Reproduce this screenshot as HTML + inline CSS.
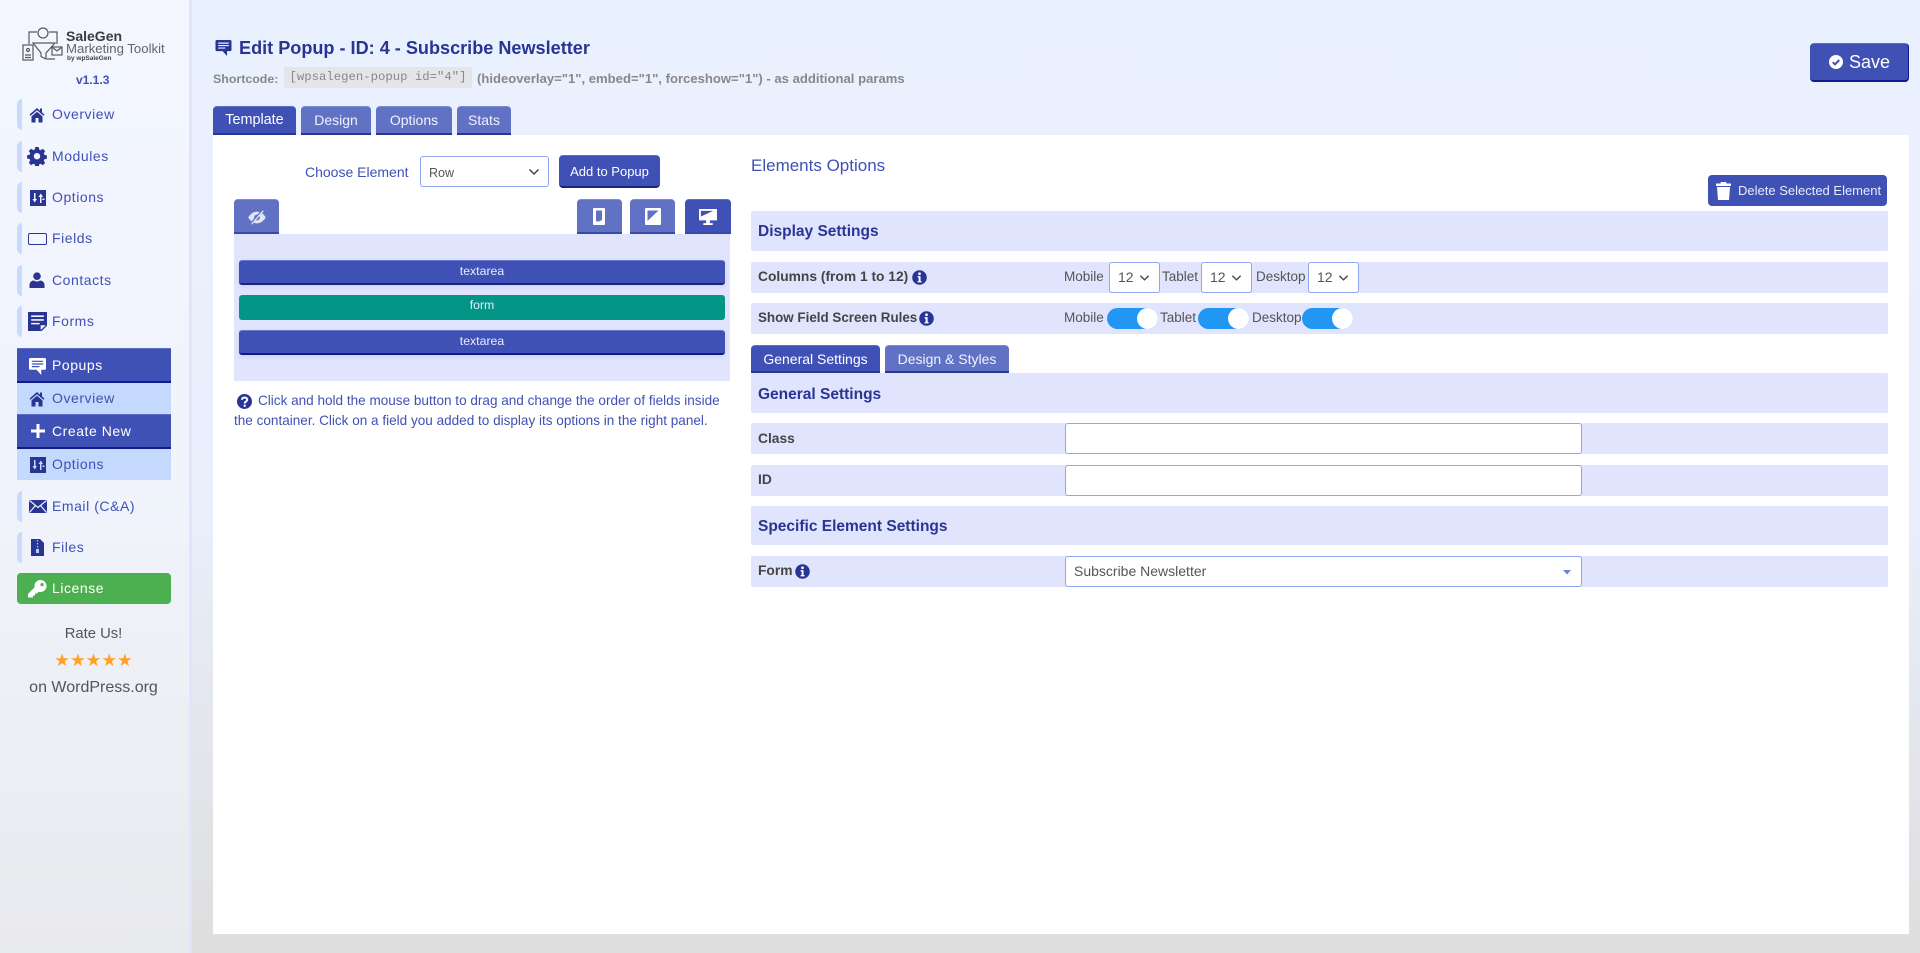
<!DOCTYPE html>
<html lang="en"><head><meta charset="utf-8"><title>Edit Popup</title>
<style>
*{box-sizing:border-box}
html,body{margin:0;padding:0}
body{width:1920px;height:953px;position:relative;overflow:hidden;font-family:"Liberation Sans",sans-serif;background:linear-gradient(#eaf1fe 0,#e9eefb 55%,#dedede 100%);color:#3f51b5}
.a{position:absolute;white-space:nowrap}
#side{position:absolute;left:0;top:0;width:192px;height:953px;background:linear-gradient(#f3f6ff 0,#f1f4fc 50%,#e9eaee 100%);border-right:3px solid #dfe6fb}
.it{position:absolute;left:17px;width:154px;height:31px;border-left:5px solid #c9dafc;border-radius:5px 0 0 5px}
.lb{position:absolute;left:52px;font-size:14px;letter-spacing:.55px;line-height:20px;color:#3f51b5;white-space:nowrap}
.ic{position:absolute}
.act{position:absolute;left:17px;width:154px;background:#3f51b5;border-bottom:2px solid #0d1b8c;border-top:1px solid #5c6fc7}
.sub{position:absolute;left:17px;width:154px;height:31px;background:#c5d8fd}
.tab{position:absolute;top:106px;height:29px;border-radius:4px 4px 0 0;text-align:center;color:#fff;font-size:14px;line-height:26px;border-bottom:2px solid #283593}
.on{background:#3f51b5;border-top:1px solid #5c6fc7}
.off{background:#6172c4;color:#f0f2ff;border-top:1px solid #7d8dd3}
.btn{position:absolute;background:#3f51b5;color:#fff;border-radius:4px;text-align:center}
.st{position:absolute;top:199px;height:35px;border-radius:4px 4px 0 0;width:45px;border-bottom:2px solid #3949ab}
.row{position:absolute;left:239px;width:486px;height:25px;border-radius:3px;color:#e8ecff;font-size:12.300px;line-height:21px;text-align:center}
.bar{position:absolute;left:751px;width:1137px;background:#e0e4fd;border-radius:2px}
.h{position:absolute;left:758px;font-weight:700;font-size:15.500px;color:#283593;line-height:20px;white-space:nowrap}
.k{position:absolute;left:758px;font-weight:700;font-size:13.800px;color:#444;line-height:20px;white-space:nowrap}
.m{position:absolute;font-size:13.500px;color:#555;line-height:20px;white-space:nowrap}
.sel{position:absolute;background:#fff;border:1px solid #8fa6ee;border-radius:3px;color:#555}
.n{width:51px;height:31px;top:262px;font-size:14px;line-height:29px;padding-left:8px}
.n svg{position:absolute;right:9px;top:11px;width:11px;height:8px}
.inp{position:absolute;left:1065px;width:517px;height:31px;background:#fff;border:1px solid #8fa6ee;border-radius:3px}
.tg{position:absolute;top:308px;width:51px;height:21px;border-radius:11px;background:#2196f3}
.tg i{position:absolute;right:0;top:0;width:21px;height:21px;border-radius:50%;background:#fff}
</style></head><body>
<svg width="0" height="0" style="position:absolute">
<symbol id="home" viewBox="0 0 16 16"><path fill="#283593" d="M8 1 0.500 7.600 1.500 8.800 8 3.200l6.500 5.600 1-1.200L13 5.400V1.500h-2v2.200zM2.500 9.400V15.500h4V11h3v4.500h4V9.400L8 4.700z"/></symbol>
<symbol id="gear" viewBox="-1 -1 20 20"><path fill="#283593" fill-rule="evenodd" d="M7.300 0h3.400l.5 2.500 1.500.7 2.200-1.400 2.300 2.400-1.400 2.100.6 1.600 2.500.5v3.300l-2.500.5-.6 1.500 1.400 2.200-2.300 2.300-2.200-1.400-1.500.6-.5 2.600H7.300l-.5-2.600-1.500-.6-2.200 1.400L.8 15.700l1.400-2.200-.6-1.500L-.9 11.500V8.200l2.500-.5.600-1.600L.8 4 3.100 1.700l2.200 1.400 1.500-.7zM9 6a3.200 3.200 0 1 0 0 6.400A3.200 3.200 0 0 0 9 6z"/></symbol>
<symbol id="opts" viewBox="0 0 16 16"><path fill="#283593" fill-rule="evenodd" d="M0 0h16v16H0zM4 3v6H2.500L4.700 12.500 7 9H5.500V3zM11.500 13V7H13l-2.200-3.500L8.500 7H10v6zM12.500 8.500h2v1.500h-2z"/></symbol>
<symbol id="user" viewBox="0 0 16 16"><circle cx="8" cy="4.200" r="3.800" fill="#283593"/><path fill="#283593" d="M0.500 16v-3c0-3 2.500-4.500 4.500-4.500 1 .7 2 1 3 1s2-.3 3-1c2 0 4.500 1.500 4.500 4.500v3z"/></symbol>
<symbol id="form" viewBox="0 0 18 18"><path fill="#283593" d="M0 0h18v13l-5 5H0z"/><path stroke="#f3f4fb" stroke-width="1.500" d="M3 4h12M3 7.500h12M3 11h8"/><path fill="#f3f4fb" d="M12 17v-4.500h5z"/></symbol>
<symbol id="chat" viewBox="0 0 18 18"><path fill="currentColor" d="M1.500 0h15A1.500 1.500 0 0 1 18 1.500V11a1.500 1.500 0 0 1-1.500 1.500H13V18l-5-5.500H1.500A1.500 1.500 0 0 1 0 11V1.500A1.500 1.500 0 0 1 1.500 0z"/><path stroke="var(--s,#3f51b5)" stroke-width="1.300" d="M3 3.500h12M3 6.300h12M3 9.100h8"/></symbol>
<symbol id="mail" viewBox="0 0 18 13"><path fill="#283593" d="M0 0h18v13H0z"/><path fill="none" stroke="#f1f2f8" stroke-width="1.200" d="M.5.500 9 7.500 17.500.500M.5 12.500 6.500 5.500M17.500 12.500 11.500 5.500"/></symbol>
<symbol id="zip" viewBox="0 0 13 17"><path fill="#283593" d="M0 0h9l4 4v13H0z"/><path stroke="#c5cdef" stroke-width="1.200" stroke-dasharray="1.500 1.500" d="M6.500 1v10"/><path fill="#c5cdef" d="M5 10h3v4H5z"/></symbol>
<symbol id="info" viewBox="0 0 14 14"><circle cx="7" cy="7" r="6.800" fill="#283593"/><circle cx="7" cy="3.500" r="1.300" fill="#fff"/><path fill="#fff" d="M5.200 5.700h2.800v4.700h1v1.200H5.200v-1.200h1V7H5.200z"/></symbol>
<symbol id="chev" viewBox="0 0 12 8"><path fill="none" stroke="#444" stroke-width="1.500" d="M1.500 1.500 6 6l4.500-4.500"/></symbol>
</svg>

<div id="side">
<svg class="ic" style="left:22px;top:26px" width="42" height="38" viewBox="0 0 42 38" fill="none" stroke="#5a5a5a" stroke-width="1.200">
<circle cx="21" cy="7" r="5"/><path d="M11 17h22l-9 10v6l-5-2.500V27zM7 18V6h8M27 6h8v12"/><rect x="1" y="19" width="10" height="15"/><path d="M3 29h6M3 31.500h6"/><circle cx="6" cy="24" r="1.500"/><rect x="30" y="21" width="10" height="8"/><path d="M30 21l5 4 5-4M25 33h8"/></svg>
<div class="a" style="left:66px;top:28px;font-size:14px;font-weight:700;color:#3c3c3c;line-height:16px">SaleGen</div>
<div class="a" style="left:66px;top:41px;font-size:13.200px;color:#666;line-height:16px">Marketing Toolkit</div>
<div class="a" style="left:67px;top:55px;font-size:6.500px;color:#444;line-height:8px;font-weight:700">by wpSaleGen</div>
<div class="a" style="left:76px;top:72px;font-size:12px;font-weight:700;color:#3f51b5;line-height:16px">v1.1.3</div>

<div class="it" style="top:99px"></div><svg class="ic" style="left:29px;top:107px" width="16" height="16"><use href="#home"/></svg><div class="lb" style="top:104px">Overview</div>
<div class="it" style="top:141px"></div><svg class="ic" style="left:27px;top:146px" width="20" height="20"><use href="#gear"/></svg><div class="lb" style="top:146px">Modules</div>
<div class="it" style="top:182px"></div><svg class="ic" style="left:30px;top:190px" width="16" height="16"><use href="#opts"/></svg><div class="lb" style="top:187px">Options</div>
<div class="it" style="top:223px"></div><div class="ic" style="left:28px;top:233px;width:19px;height:12px;border:1.500px solid #283593;border-radius:2px"></div><div class="lb" style="top:228px">Fields</div>
<div class="it" style="top:265px"></div><svg class="ic" style="left:29px;top:272px" width="16" height="16"><use href="#user"/></svg><div class="lb" style="top:270px">Contacts</div>
<div class="it" style="top:306px"></div><svg class="ic" style="left:28px;top:312px" width="19" height="19"><use href="#form"/></svg><div class="lb" style="top:311px">Forms</div>

<div class="act" style="top:348px;height:35px"></div><svg class="ic" style="left:29px;top:358px;color:#fff;--s:#3f51b5" width="17" height="17"><use href="#chat"/></svg><div class="lb" style="top:355px;color:#fff">Popups</div>
<div class="sub" style="top:383px"></div><svg class="ic" style="left:29px;top:391px" width="16" height="16"><use href="#home"/></svg><div class="lb" style="top:388px;color:#3f51b5">Overview</div>
<div class="act" style="top:414px;height:35px"></div><svg class="ic" style="left:31px;top:424px" width="14" height="14"><path fill="#fff" d="M5.500 0h3v5.500H14v3H8.500V14h-3V8.500H0v-3h5.500z"/></svg><div class="lb" style="top:421px;color:#fff">Create New</div>
<div class="sub" style="top:449px"></div><svg class="ic" style="left:30px;top:457px" width="16" height="16"><use href="#opts"/></svg><div class="lb" style="top:454px;color:#3f51b5">Options</div>

<div class="it" style="top:491px"></div><svg class="ic" style="left:29px;top:500px" width="18" height="13"><use href="#mail"/></svg><div class="lb" style="top:496px">Email (C&amp;A)</div>
<div class="it" style="top:532px"></div><svg class="ic" style="left:31px;top:539px" width="13" height="17"><use href="#zip"/></svg><div class="lb" style="top:537px">Files</div>
<div class="a" style="left:17px;top:573px;width:154px;height:31px;background:#4caf50;border-radius:4px"></div>
<svg class="ic" style="left:28px;top:580px" width="19" height="18" viewBox="0 0 19 18"><path fill="#fff" fill-rule="evenodd" d="M12.500 0a6 6 0 1 1-1.800 11.700L9 13.500H7v2H5v2H0v-3.500L6.600 7.300A6 6 0 0 1 12.500 0zm1.500 3a1.600 1.600 0 1 0 0 3.200A1.600 1.600 0 0 0 14 3z"/></svg>
<div class="lb" style="top:578px;color:#fff">License</div>

<div class="a" style="left:0;top:624px;width:187px;text-align:center;font-size:14.800px;line-height:20px;color:#555">Rate Us!</div>
<div class="a" style="left:0;top:650px;width:187px;text-align:center;font-size:17.500px;line-height:20px;color:#ffa028">★★★★★</div>
<div class="a" style="left:0;top:678px;width:187px;text-align:center;font-size:16px;line-height:20px;color:#555">on WordPress.org</div>
</div>

<svg class="ic" style="left:215px;top:40px;color:#283593;--s:#e9f0fd" width="17" height="16"><use href="#chat"/></svg>
<div class="a" style="left:239px;top:37px;font-size:18.100px;font-weight:700;color:#283593;line-height:22px">Edit Popup - ID: 4 - Subscribe Newsletter</div>
<div class="a" style="left:213px;top:71px;font-size:12.400px;font-weight:700;color:#888;line-height:16px">Shortcode:</div>
<div class="a" style="left:284px;top:67px;width:188px;height:21px;background:#e3e5e8;color:#888;font:12.300px/21px 'Liberation Mono',monospace;text-align:center">[wpsalegen-popup id="4"]</div>
<div class="a" style="left:477px;top:71px;font-size:13.100px;font-weight:700;color:#888;line-height:16px">(hideoverlay="1", embed="1", forceshow="1") - as additional params</div>

<div class="btn" style="left:1810px;top:43px;width:99px;height:39px;font-size:18px;line-height:37px;border-bottom:2px solid #0d1b8c;border-right:1px solid #0d1b8c;border-top:1px solid #5c6fc7">
<svg style="position:absolute;left:19px;top:11px" width="14" height="14" viewBox="0 0 14 14"><circle cx="7" cy="7" r="7" fill="#fff"/><path fill="none" stroke="#3f51b5" stroke-width="2" d="M3.800 7.200 6 9.400l4.200-4.400"/></svg><span style="position:absolute;left:39px;top:0">Save</span></div>

<div class="a" style="left:213px;top:135px;width:1696px;height:799px;background:#fff"></div>
<div class="tab on" style="left:213px;width:83px;font-size:14.400px">Template</div>
<div class="tab off" style="left:301px;width:70px">Design</div>
<div class="tab off" style="left:376px;width:76px">Options</div>
<div class="tab off" style="left:457px;width:54px">Stats</div>

<div class="a" style="left:305px;top:162px;font-size:14px;line-height:20px;color:#3f51b5">Choose Element</div>
<div class="sel" style="left:420px;top:156px;width:129px;height:31px;font-size:12.500px;line-height:32px;padding-left:8px">Row<svg style="position:absolute;right:8px;top:11px;width:12px;height:8px"><use href="#chev"/></svg></div>
<div class="btn" style="left:559px;top:155px;width:101px;height:33px;font-size:13px;line-height:31px;border-bottom:2px solid #1a237e;border-top:1px solid #5c6fc7">Add to Popup</div>

<div class="st off" style="left:234px"><svg style="position:absolute;left:13px;top:10px" width="20" height="15" viewBox="0 0 23 18" fill="none"><path fill="#dfe4f8" d="M1 9c3-5 7-7 10.500-7S19 4 22 9c-3 5-7 7-10.500 7S4 14 1 9z"/><circle cx="11.500" cy="9" r="3.500" fill="#6172c4"/><path stroke="#6172c4" stroke-width="3" d="M4 17 18 1"/><path stroke="#dfe4f8" stroke-width="1.500" d="M5 17 19 1"/></svg></div>
<div class="st off" style="left:577px"><svg style="position:absolute;left:16px;top:8px" width="12" height="17" viewBox="0 0 12 17"><rect width="12" height="17" rx="1" fill="#fff"/><path fill="#6172c4" d="M3 2.500h6v9.500l-3 1.500-3-.3z"/></svg></div>
<div class="st off" style="left:630px"><svg style="position:absolute;left:15px;top:8px" width="16" height="17" viewBox="0 0 16 17"><rect width="16" height="17" rx="1" fill="#fff"/><path fill="#6172c4" d="M2.500 2.500h11v0L2.500 13z"/></svg></div>
<div class="st on" style="left:685px;width:46px"><svg style="position:absolute;left:14px;top:9px" width="18" height="17" viewBox="0 0 19 18"><path fill="#fff" d="M0 0h19v12H0zM7.500 12h4v3h3v2h-10v-2h3z"/><path fill="#3f51b5" d="M2 2h13L2 8z"/></svg></div>

<div class="a" style="left:234px;top:234px;width:496px;height:147px;background:#e0e4fd"></div>
<div class="row" style="top:260px;background:#3f51b5;border-bottom:2px solid #1a237e;border-top:1px solid #6878cf;box-shadow:0 2px 4px rgba(63,81,181,.12)">textarea</div>
<div class="row" style="top:295px;background:#039686">form</div>
<div class="row" style="top:330px;background:#3f51b5;border-bottom:2px solid #0d1b8c;border-top:1px solid #6878cf;box-shadow:0 2px 4px rgba(63,81,181,.12)">textarea</div>

<svg class="ic" style="left:237px;top:394px" width="15" height="15" viewBox="0 0 15 15"><circle cx="7.500" cy="7.500" r="7.500" fill="#283593"/><path fill="none" stroke="#fff" stroke-width="2" d="M5 5.800c0-3.200 5.200-3 5.200-.1 0 2-2.500 1.800-2.500 3.800"/><circle cx="7.700" cy="11.700" r="1.200" fill="#fff"/></svg>
<div class="a" style="left:258px;top:391px;font-size:13.550px;line-height:20px;color:#3f51b5">Click and hold the mouse button to drag and change the order of fields inside</div>
<div class="a" style="left:234px;top:411px;font-size:13.550px;line-height:20px;color:#3f51b5">the container. Click on a field you added to display its options in the right panel.</div>

<div class="a" style="left:751px;top:156px;font-size:17px;line-height:20px;color:#3f51b5">Elements Options</div>
<div class="btn" style="left:1708px;top:175px;width:179px;height:31px;font-size:13px;line-height:31px;text-align:left;padding-left:30px;color:#e8ecff">
<svg style="position:absolute;left:8px;top:7px" width="15" height="18" viewBox="0 0 15 18"><path fill="#fff" d="M5 0h5l.7 1.500H15V4H0V1.500h4.300zM1 5h13l-1 13H2z"/></svg>Delete Selected Element</div>

<div class="bar" style="top:211px;height:40px"></div><div class="h" style="top:222px">Display Settings</div>

<div class="bar" style="top:262px;height:31px"></div><div class="k" style="top:267px">Columns (from 1 to 12)</div><svg class="ic" style="left:912px;top:270px" width="15" height="15"><use href="#info"/></svg>
<div class="m" style="left:1064px;top:267px">Mobile</div>
<div class="sel n" style="left:1109px">12<svg><use href="#chev"/></svg></div>
<div class="m" style="left:1162px;top:267px">Tablet</div>
<div class="sel n" style="left:1201px">12<svg><use href="#chev"/></svg></div>
<div class="m" style="left:1256px;top:267px">Desktop</div>
<div class="sel n" style="left:1308px">12<svg><use href="#chev"/></svg></div>

<div class="bar" style="top:303px;height:31px"></div><div class="k" style="top:308px;font-size:13.400px">Show Field Screen Rules</div><svg class="ic" style="left:919px;top:311px" width="15" height="15"><use href="#info"/></svg>
<div class="m" style="left:1064px;top:308px">Mobile</div><div class="tg" style="left:1107px"><i></i></div>
<div class="m" style="left:1160px;top:308px">Tablet</div><div class="tg" style="left:1198px"><i></i></div>
<div class="m" style="left:1252px;top:308px">Desktop</div><div class="tg" style="left:1302px"><i></i></div>

<div class="tab on" style="left:751px;top:345px;width:129px;height:28px">General Settings</div>
<div class="tab off" style="left:885px;top:345px;width:124px;height:28px">Design &amp; Styles</div>

<div class="bar" style="top:373px;height:40px"></div><div class="h" style="top:385px">General Settings</div>
<div class="bar" style="top:423px;height:31px"></div><div class="k" style="top:429px">Class</div><div class="inp" style="top:423px"></div>
<div class="bar" style="top:465px;height:31px"></div><div class="k" style="top:470px">ID</div><div class="inp" style="top:465px"></div>
<div class="bar" style="top:506px;height:39px"></div><div class="h" style="top:517px">Specific Element Settings</div>
<div class="bar" style="top:556px;height:31px"></div><div class="k" style="top:561px">Form</div><svg class="ic" style="left:795px;top:564px" width="15" height="15"><use href="#info"/></svg>
<div class="inp" style="top:556px;font-size:14px;color:#555;line-height:29px;padding-left:8px">Subscribe Newsletter<svg style="position:absolute;right:10px;top:13px" width="8" height="5"><path fill="#6b7fe0" d="M0 0h8L4 4.500z"/></svg></div>
</body></html>
